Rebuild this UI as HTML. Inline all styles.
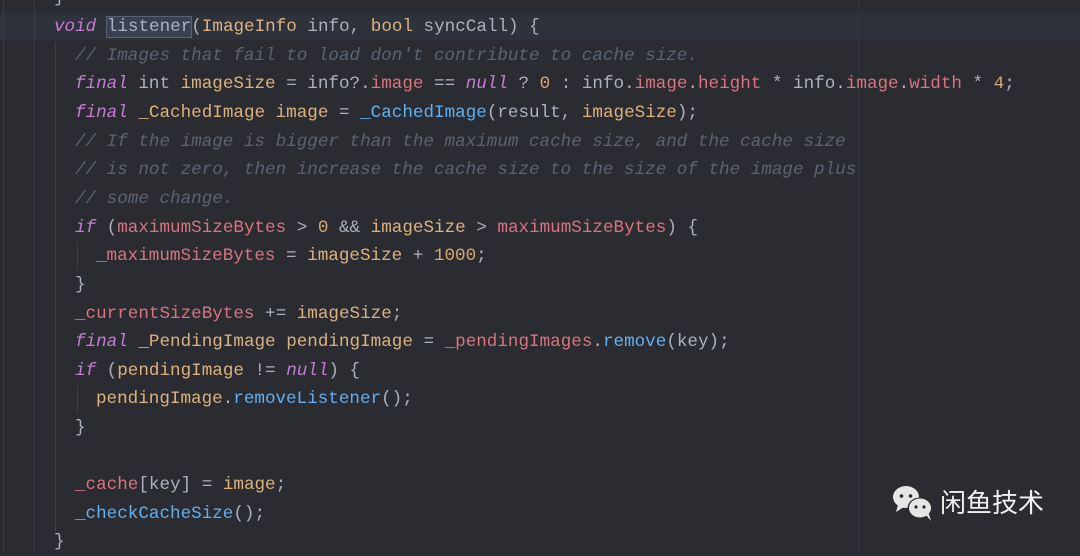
<!DOCTYPE html>
<html><head><meta charset="utf-8"><style>
html,body{margin:0;padding:0}
body{width:1080px;height:552px;background:#2a2c31;overflow:hidden;position:relative;font-family:"Liberation Mono",monospace;font-size:17.6px;color:#abb2bf}
.hl{position:absolute;left:0;top:12px;width:1080px;height:28px;background:#2e323a}
.l{position:absolute;white-space:pre;height:28px;line-height:28px}
.k{color:#c37dd3;font-style:italic}
.t{color:#dcb27e}
.c{color:#5c6370;font-style:italic}
.r{color:#d9737f}
.f{color:#61afef}
.n{color:#d9a770}
.g{position:absolute;width:1px;background:#3b3f47}
.sel{outline:1px solid #5a6170;background:#394150}
</style></head><body>
<div class="hl"></div>
<div class="g" style="left:3px;top:0;height:552px;background:#3a3d44"></div>
<div class="g" style="left:34px;top:0;height:552px;background:#3a3d44"></div>
<div class="g" style="left:858px;top:0;height:552px;background:#33363d"></div>
<div class="g" style="left:55px;top:42px;height:490px"></div>
<div class="g" style="left:77px;top:242px;height:28px"></div>
<div class="g" style="left:77px;top:385px;height:28px"></div>
<div class="l" style="left:54px;top:-16px">}</div>
<div class="l" style="left:54px;top:13px"><span class="k">void</span> <span class="sel">listener</span>(<span class="t">ImageInfo</span> info, <span class="t">bool</span> syncCall) {</div>
<div class="l" style="left:75px;top:42px"><span class="c">// Images that fail to load don't contribute to cache size.</span></div>
<div class="l" style="left:75px;top:70px"><span class="k">final</span> int <span class="t">imageSize</span> = info?.<span class="r">image</span> == <span class="k">null</span> ? <span class="n">0</span> : info.<span class="r">image</span>.<span class="r">height</span> * info.<span class="r">image</span>.<span class="r">width</span> * <span class="n">4</span>;</div>
<div class="l" style="left:75px;top:99px"><span class="k">final</span> <span class="t">_CachedImage</span> <span class="t">image</span> = <span class="f">_CachedImage</span>(result, <span class="t">imageSize</span>);</div>
<div class="l" style="left:75px;top:128px"><span class="c">// If the image is bigger than the maximum cache size, and the cache size</span></div>
<div class="l" style="left:75px;top:156px"><span class="c">// is not zero, then increase the cache size to the size of the image plus</span></div>
<div class="l" style="left:75px;top:185px"><span class="c">// some change.</span></div>
<div class="l" style="left:75px;top:214px"><span class="k">if</span> (<span class="r">maximumSizeBytes</span> &gt; <span class="n">0</span> &amp;&amp; <span class="t">imageSize</span> &gt; <span class="r">maximumSizeBytes</span>) {</div>
<div class="l" style="left:96px;top:242px"><span class="r">_maximumSizeBytes</span> = <span class="t">imageSize</span> + <span class="n">1000</span>;</div>
<div class="l" style="left:75px;top:271px">}</div>
<div class="l" style="left:75px;top:300px"><span class="r">_currentSizeBytes</span> += <span class="t">imageSize</span>;</div>
<div class="l" style="left:75px;top:328px"><span class="k">final</span> <span class="t">_PendingImage</span> <span class="t">pendingImage</span> = <span class="r">_pendingImages</span>.<span class="f">remove</span>(key);</div>
<div class="l" style="left:75px;top:357px"><span class="k">if</span> (<span class="t">pendingImage</span> != <span class="k">null</span>) {</div>
<div class="l" style="left:96px;top:385px"><span class="t">pendingImage</span>.<span class="f">removeListener</span>();</div>
<div class="l" style="left:75px;top:414px">}</div>
<div class="l" style="left:75px;top:471px"><span class="r">_cache</span>[key] = <span class="t">image</span>;</div>
<div class="l" style="left:75px;top:500px"><span class="f">_checkCacheSize</span>();</div>
<div class="l" style="left:54px;top:528px">}</div>
<svg style="position:absolute;left:892px;top:484px" width="46" height="40" viewBox="0 0 46 40">
<ellipse cx="14" cy="13" rx="13" ry="11" fill="#e6e6e6"/>
<path d="M6 21 L4 28 L12 23 Z" fill="#e6e6e6"/>
<circle cx="9.5" cy="12" r="1.8" fill="#2a2c31"/><circle cx="18.5" cy="12" r="1.8" fill="#2a2c31"/>
<ellipse cx="28" cy="24" rx="12.5" ry="10.5" fill="#2a2c31"/>
<ellipse cx="28" cy="24" rx="11" ry="9.5" fill="#e6e6e6"/>
<path d="M34 31 L39 37 L37 30 Z" fill="#e6e6e6"/>
<circle cx="24" cy="23" r="1.6" fill="#2a2c31"/><circle cx="32" cy="23" r="1.6" fill="#2a2c31"/>
</svg>
<div style="position:absolute;left:940px;top:486px;font-family:'Liberation Sans','Noto Sans CJK SC',sans-serif;font-size:26px;color:#f0f0f0;line-height:34px">闲鱼技术</div>
</body></html>
